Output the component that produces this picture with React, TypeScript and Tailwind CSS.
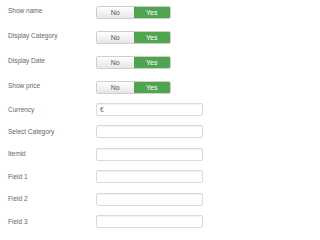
import React from "react";

const toggles = ["Show name", "Display Category", "Display Date", "Show price"];
const fields = [
  { label: "Currency", value: "€" },
  { label: "Select Category", value: "" },
  { label: "Itemid", value: "" },
  { label: "Field 1", value: "" },
  { label: "Field 2", value: "" },
  { label: "Field 3", value: "" },
];

function Toggle() {
  return (
    <div className="flex h-[13px] w-[75px] rounded-[2px] overflow-hidden border border-[#cfcfcf] text-[7px] leading-none">
      <div className="flex-1 flex items-center justify-center bg-gradient-to-b from-white to-[#e6e6e6] text-[#555]">
        No
      </div>
      <div className="flex-1 flex items-center justify-center bg-[#4fa54f] text-white">
        Yes
      </div>
    </div>
  );
}

export default function App() {
  return (
    <div
      className="w-[250px] h-[240px] bg-white pl-[8px] pt-[6px]"
      style={{ fontFamily: '"Liberation Sans", Arial, sans-serif' }}
    >
      <div className="flex flex-col gap-[12px]">
        {toggles.map((t) => (
          <div key={t} className="flex items-start h-[13px]">
            <div className="w-[88px] text-[6.5px] leading-[9px] text-[#666]">{t}</div>
            <Toggle />
          </div>
        ))}
      </div>
      <div className="flex flex-col mt-[9px]">
        {fields.map((f) => (
          <div key={f.label} className="flex h-[22.4px]">
            <div className="w-[88px] h-[13px] flex items-center text-[6.5px] text-[#666]">
              {f.label}
            </div>
            <div className="w-[107px] h-[13px] border border-[#dadada] rounded-[2px] px-[3px] flex items-center text-[6.5px] text-[#666] shadow-[inset_0_1px_1px_rgba(0,0,0,0.06)]">
              {f.value}
            </div>
          </div>
        ))}
      </div>
    </div>
  );
}
